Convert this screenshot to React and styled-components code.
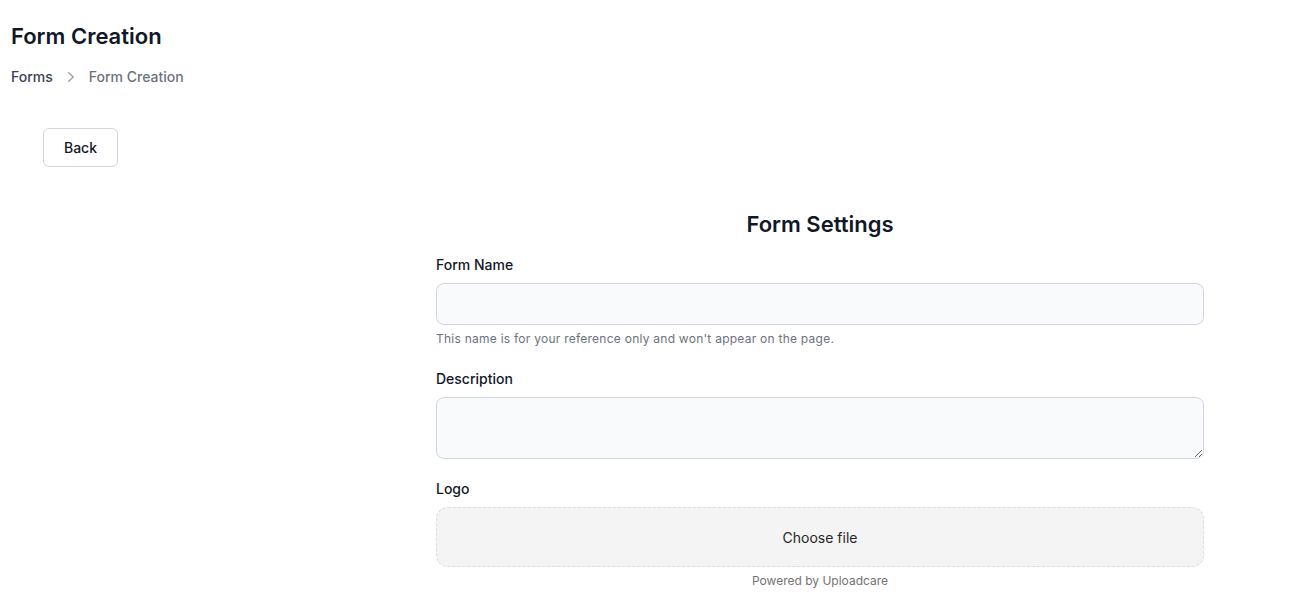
import styled, { createGlobalStyle } from "styled-components"

const GlobalStyle = createGlobalStyle`
  body {
    margin: 0;
    background: #ffffff;
    font-family: Inter, "Noto Sans", sans-serif;
    color: #111827;
  }
`

const Page = styled.div`
  padding: 20px 11px 0 11px;
`

const Header = styled.div`
  display: flex;
  flex-direction: column;
  gap: 15px;
`

const Title = styled.h1`
  margin: 0;
  font-size: 22px;
  line-height: 32px;
  font-weight: 600;
  color: #111827;
`

const Breadcrumb = styled.nav`
  display: flex;
  align-items: center;
  gap: 8px;
  font-size: 14px;
  line-height: 20px;
`

const Crumb = styled.span`
  font-weight: 500;
  color: ${(p) => (p.current ? "#6b7280" : "#374151")};
`

const Body = styled.div`
  display: flex;
  flex-direction: column;
  padding: 41px 32px 0 32px;
`

const BackButton = styled.button`
  align-self: flex-start;
  width: 75px;
  height: 39px;
  border: 1px solid #d1d5db;
  border-radius: 6px;
  background: #ffffff;
  font-family: inherit;
  font-size: 14px;
  font-weight: 500;
  color: #111827;
`

const FormRow = styled.div`
  display: grid;
  grid-template-columns: 393px 768px;
  padding-top: 41px;
`

const FormPanel = styled.div`
  grid-column: 2;
  display: flex;
  flex-direction: column;
`

const FormTitle = styled.h2`
  margin: 0 0 15px 0;
  text-align: center;
  font-size: 22px;
  line-height: 32px;
  font-weight: 600;
  color: #111827;
`

const Field = styled.div`
  display: flex;
  flex-direction: column;
  margin-bottom: ${(p) => p.gap || 20}px;
`

const Label = styled.label`
  font-size: 14px;
  line-height: 20px;
  font-weight: 500;
  color: #111827;
  margin-bottom: 8px;
`

const TextInput = styled.input`
  box-sizing: border-box;
  height: 42px;
  width: 100%;
  border: 1px solid #d1d5db;
  border-radius: 8px;
  background: #f9fafb;
  padding: 10px;
  font-family: inherit;
  font-size: 14px;
`

const TextArea = styled.textarea`
  box-sizing: border-box;
  height: 62px;
  width: 100%;
  border: 1px solid #d1d5db;
  border-radius: 8px;
  background: #f9fafb;
  padding: 10px;
  font-family: inherit;
  font-size: 14px;
  display: block;
`

const Help = styled.p`
  margin: 6px 0 0 0;
  font-size: 12px;
  line-height: 16px;
  letter-spacing: 0.25px;
  color: #6b7280;
`

const Dropzone = styled.div`
  box-sizing: border-box;
  height: 60px;
  border: 1px dashed #dcdcdc;
  border-radius: 12px;
  background: #f4f4f4;
  display: flex;
  align-items: center;
  justify-content: center;
  font-size: 14px;
  color: #262626;
`

const Powered = styled.div`
  margin-top: 7px;
  text-align: center;
  font-size: 12px;
  line-height: 14px;
  color: #737373;
`

const Chevron = () => (
  <svg width="20" height="20" viewBox="0 0 20 20" fill="#9ca3af">
    <path
      fillRule="evenodd"
      d="M7.21 14.77a.75.75 0 01.02-1.06L11.168 10 7.23 6.29a.75.75 0 111.04-1.08l4.5 4.25a.75.75 0 010 1.08l-4.5 4.25a.75.75 0 01-1.06-.02z"
      clipRule="evenodd"
    />
  </svg>
)

export default function App() {
  return (
    <>
      <GlobalStyle />
      <Page>
        <Header>
          <Title>Form Creation</Title>
          <Breadcrumb>
            <Crumb>Forms</Crumb>
            <Chevron />
            <Crumb current>Form Creation</Crumb>
          </Breadcrumb>
        </Header>
        <Body>
          <BackButton>Back</BackButton>
          <FormRow>
            <FormPanel>
              <FormTitle>Form Settings</FormTitle>
              <Field gap={22}>
                <Label>Form Name</Label>
                <TextInput />
                <Help>This name is for your reference only and won't appear on the page.</Help>
              </Field>
              <Field gap={20}>
                <Label>Description</Label>
                <TextArea />
              </Field>
              <Field>
                <Label>Logo</Label>
                <Dropzone>Choose file</Dropzone>
                <Powered>Powered by Uploadcare</Powered>
              </Field>
            </FormPanel>
          </FormRow>
        </Body>
      </Page>
    </>
  )
}
